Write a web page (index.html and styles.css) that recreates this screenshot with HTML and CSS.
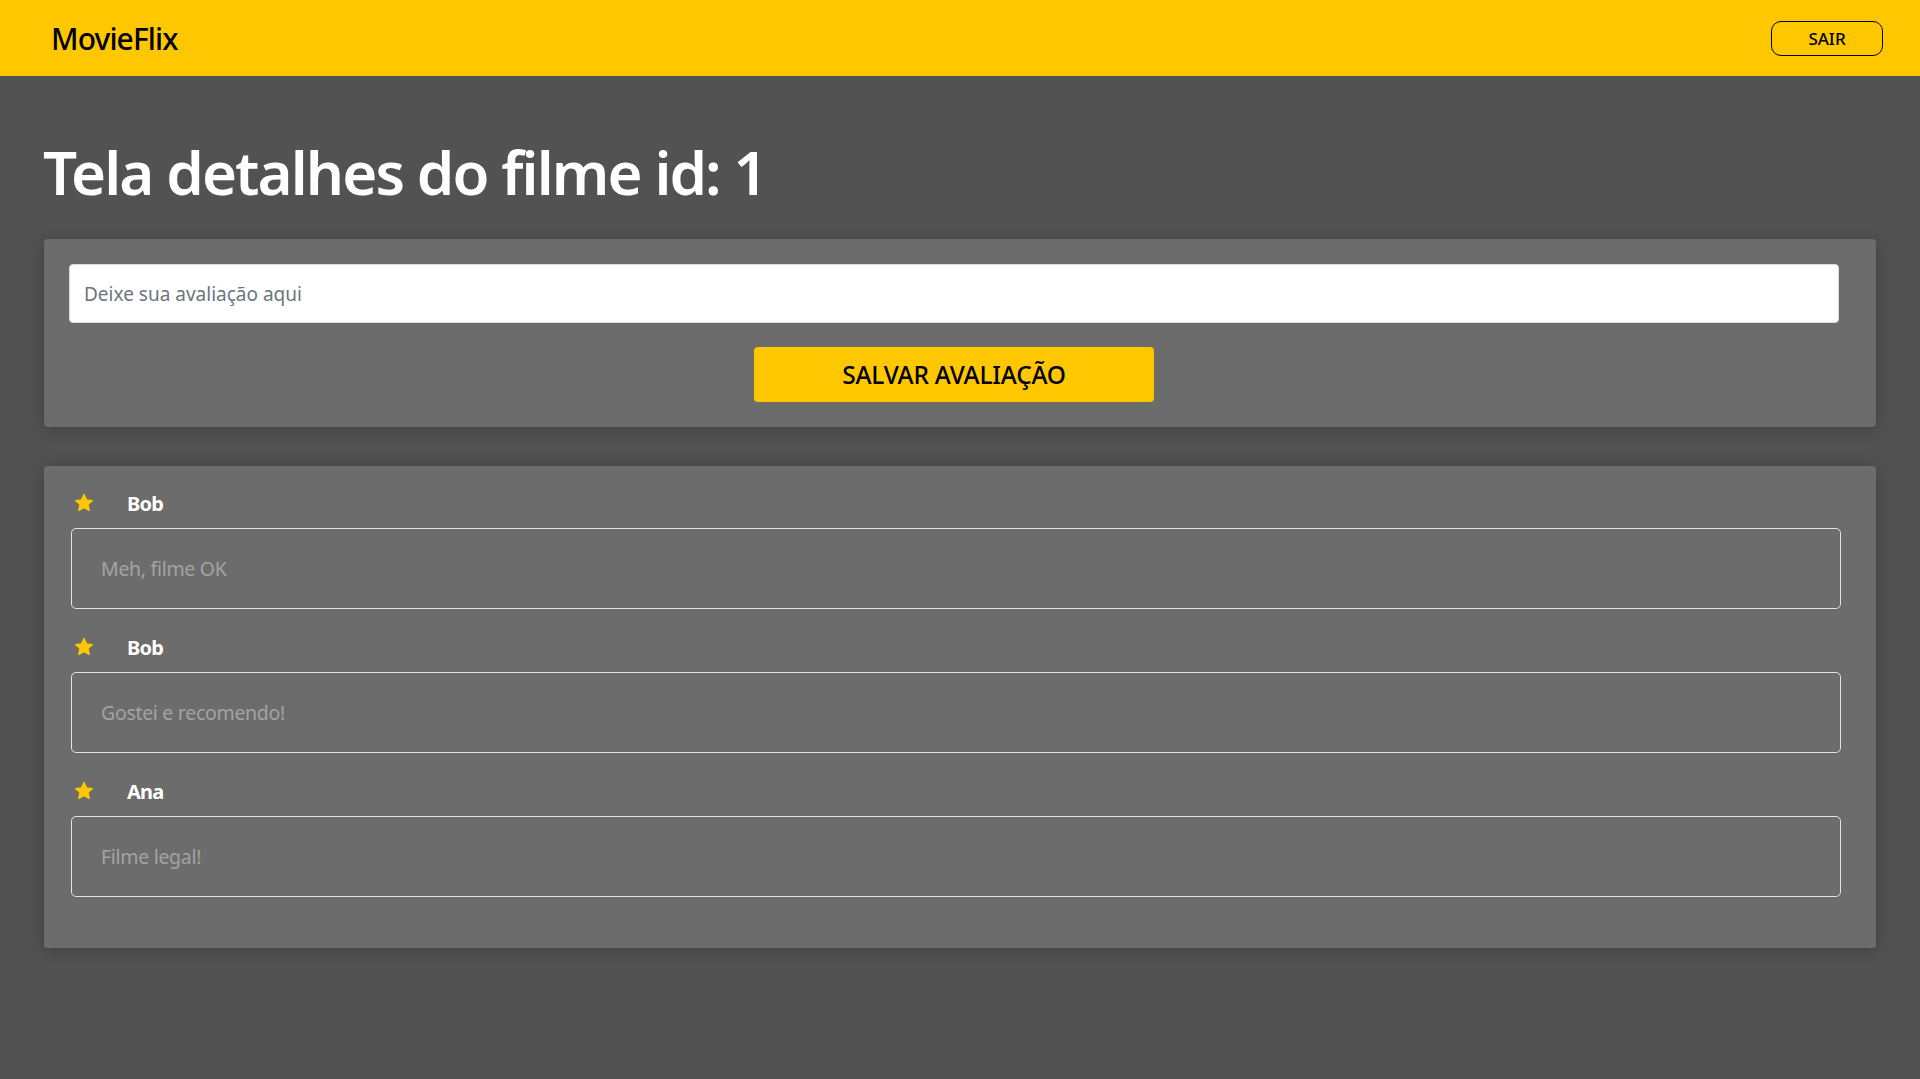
FILE: index.html
```html
<!DOCTYPE html>
<html lang="pt-BR">
<head>
<meta charset="utf-8">
<title>MovieFlix</title>
<link rel="stylesheet" href="styles.css">
</head>
<body>
<header class="navbar">
  <span class="brand">MovieFlix</span>
  <button class="logout">SAIR</button>
</header>
<main class="page">
  <h1 class="title">Tela detalhes do filme id: 1</h1>
  <section class="card form-card">
    <input class="review-input" type="text" placeholder="Deixe sua avaliação aqui">
    <div class="btn-row"><button class="save-btn">SALVAR AVALIAÇÃO</button></div>
  </section>
  <section class="card list-card">
    <div class="review">
      <div class="review-head">
        <svg class="star" viewBox="0 0 24 24"><path d="M12 2.8l2.7 5.9 6.3.7-4.7 4.3 1.3 6.3L12 16.8 6.4 20l1.3-6.3L3 9.4l6.3-.7z"/></svg>
        <span class="name">Bob</span>
      </div>
      <div class="review-text">Meh, filme OK</div>
    </div>
    <div class="review">
      <div class="review-head">
        <svg class="star" viewBox="0 0 24 24"><path d="M12 2.8l2.7 5.9 6.3.7-4.7 4.3 1.3 6.3L12 16.8 6.4 20l1.3-6.3L3 9.4l6.3-.7z"/></svg>
        <span class="name">Bob</span>
      </div>
      <div class="review-text">Gostei e recomendo!</div>
    </div>
    <div class="review">
      <div class="review-head">
        <svg class="star" viewBox="0 0 24 24"><path d="M12 2.8l2.7 5.9 6.3.7-4.7 4.3 1.3 6.3L12 16.8 6.4 20l1.3-6.3L3 9.4l6.3-.7z"/></svg>
        <span class="name">Ana</span>
      </div>
      <div class="review-text">Filme legal!</div>
    </div>
  </section>
</main>
</body>
</html>
```
FILE: styles.css
```css
* { box-sizing: border-box; }
html, body { margin: 0; padding: 0; }
body {
  background: #525252;
  font-family: "Noto Sans", "Open Sans", sans-serif;
  min-height: 1079px;
}
.navbar {
  height: 76px;
  background: #ffc700;
  display: flex;
  align-items: center;
  justify-content: space-between;
  padding: 0 37px 0 51px;
}
.brand {
  font-size: 30px;
  font-weight: 500;
  color: #000;
  letter-spacing: -0.9px;
}
.logout {
  width: 112px;
  height: 35px;
  border: 1px solid #000;
  border-radius: 10px;
  background: transparent;
  font-family: inherit;
  font-size: 17px;
  font-weight: 500;
  color: #000;
  padding: 0;
  margin-top: 1px;
}
.page {
  padding: 0 44px;
}
.title {
  margin: 63px 0 33px;
  font-size: 60px;
  line-height: 67px;
  font-weight: 600;
  color: #fff;
  letter-spacing: -1.9px;
  margin-left: -1px;
}
.card {
  background: #6c6c6c;
  border-radius: 4px;
  box-shadow: 0 2px 18px rgba(0, 0, 0, 0.22);
}
.form-card {
  padding: 25px 37px 25px 25px;
  margin-bottom: 39px;
}
.review-input {
  display: block;
  width: 100%;
  height: 59px;
  border: 1px solid #dcdcdc;
  border-radius: 4px;
  background: #fff;
  padding: 0 14px;
  font-family: inherit;
  font-size: 19px;
  color: #333;
}
.review-input::placeholder { color: #6c757d; }
.btn-row {
  display: flex;
  justify-content: center;
  margin-top: 24px;
}
.save-btn {
  width: 400px;
  height: 55px;
  background: #ffc700;
  border: none;
  border-radius: 4px;
  font-family: inherit;
  font-size: 24.5px;
  font-weight: 500;
  color: #000;
  letter-spacing: -0.2px;
}
.list-card {
  padding: 22px 35px 28px 27px;
}
.review {
  margin-bottom: 23px;
}
.review-head {
  height: 30px;
  display: flex;
  align-items: center;
  padding-left: 2px;
}
.star {
  width: 22px;
  height: 22px;
  fill: #ffc700;
  stroke: #ffc700;
  stroke-width: 1.6;
  stroke-linejoin: round;
  margin-right: 32px;
}
.name {
  font-size: 20px;
  font-weight: 700;
  color: #fff;
  letter-spacing: -0.8px;
}
.review-text {
  margin-top: 10px;
  height: 81px;
  border: 1px solid #e4e4e4;
  border-radius: 5px;
  display: flex;
  align-items: center;
  padding-left: 29px;
  font-size: 19.5px;
  color: #a3a3a3;
  letter-spacing: -0.3px;
}
```
